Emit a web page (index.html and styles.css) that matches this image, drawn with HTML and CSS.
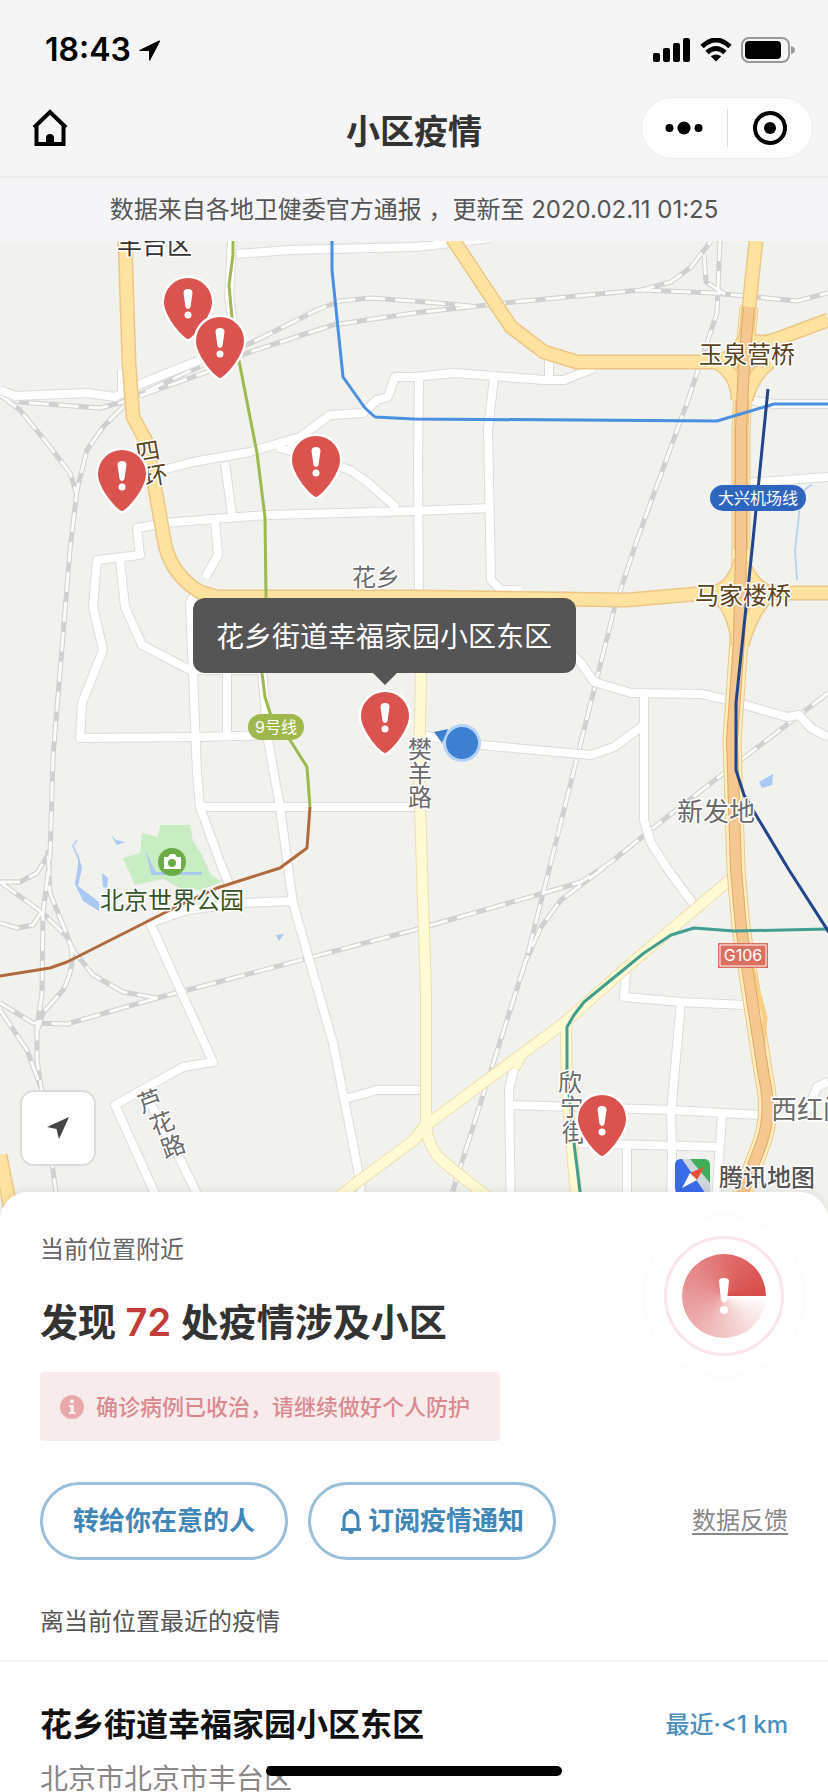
FILE: index.html
```html
<!DOCTYPE html>
<html lang="zh-CN">
<head>
<meta charset="utf-8">
<meta name="viewport" content="width=device-width, initial-scale=1">
<title>小区疫情</title>
<link rel="stylesheet" href="styles.css">
</head>
<body>
<div class="app">
  <header class="top">
    <div class="status">
      <div class="status-time">
        <span>18:43</span>
        <svg width="24" height="24" viewBox="0 0 24 24" aria-hidden="true"><path d="M21 2.500 1.500 12q-.8.6.2 1H11V22q.4 1.200 1.200.2L22 3.500Q22 2 21 2.500Z"/></svg>
      </div>
      <div class="status-icons">
        <svg width="38" height="24" viewBox="0 0 38 24" aria-hidden="true"><rect x="0" y="15" width="7" height="9" rx="2"/><rect x="10" y="10" width="7" height="14" rx="2"/><rect x="20" y="5" width="7" height="19" rx="2"/><rect x="30" y="0" width="7" height="24" rx="2"/></svg>
        <svg width="32" height="24" viewBox="0 0 32 24" aria-hidden="true"><path class="wifi" d="M2 8.500Q16-4.500 30 8.500M7 14.500Q16 6.500 25 14.500"/><path d="M16 23.500 10.800 18.300Q16 14.500 21.200 18.300Z"/></svg>
        <svg width="54" height="26" viewBox="0 0 54 26" aria-hidden="true"><rect class="cell" x="1" y="1" width="47" height="24" rx="7"/><rect x="4" y="4" width="36" height="18" rx="4"/><path class="tip" d="M50 9q4 1 4 4t-4 4Z"/></svg>
      </div>
    </div>
    <nav class="nav">
      <button class="home" type="button" aria-label="首页">
        <svg width="36" height="38" viewBox="0 0 36 38" aria-hidden="true"><path class="house" d="M2 18.500 18 3 34 18.500M4.500 17V35H31.500V17"/><path d="M14 36V29Q14 25 18 25T22 29V36Z"/></svg>
      </button>
      <h1 class="nav-title">小区疫情</h1>
      <div class="capsule">
        <button type="button" aria-label="更多"><svg width="38" height="14" viewBox="0 0 38 14" aria-hidden="true"><circle cx="4.500" cy="7" r="4"/><circle cx="19" cy="7" r="6.500"/><circle cx="33.500" cy="7" r="4"/></svg></button>
        <button type="button" aria-label="关闭"><svg width="36" height="36" viewBox="0 0 36 36" aria-hidden="true"><circle class="ring" cx="18" cy="18" r="15"/><circle cx="18" cy="18" r="6"/></svg></button>
      </div>
    </nav>
  </header>

  <p class="source">数据来自各地卫健委官方通报 ，更新至 2020.02.11 01:25</p>

  <section class="map" aria-label="疫情地图">
    <svg class="map-canvas" viewBox="0 241 828 975" role="img" aria-label="花乡周边地图">
      <defs>
        <g id="streets">
          <path d="M0 390 15 396 87 393 115 397 143 383 200 360 225 350M122 397V370"/>
          <path d="M232 241 229 297 234 330M237 254 290 250 414 247 434 245 490 238"/>
          <path d="M163 470 193 462 250 452 300 437 330 415 363 413 377 400 388 397 395 377 414 377 454 373 494 376 544 380H564L594 368M549 360V380"/>
          <path d="M277 447 350 470 367 482 397 508M288 447H315"/>
          <path d="M165 523 213 519 267 515 414 511 489 508"/>
          <path d="M165 523 137 528 140 555 97 560 93 607 103 650 82 703 80 738 197 737 270 735M120 560 125 607 142 645 190 670H266"/>
          <path d="M225 463 232 515M215 521 218 555 205 578"/>
          <path d="M200 585 190 603 193 673 197 773 200 807 220 862 229 884"/>
          <path d="M227 670V737M262 670 268 740 280 807 288 867 293 903 333 1043 360 1180 362 1216M200 807H420"/>
          <path d="M419 377 418 463 419 600M494 377 488 430 491 580 501 590H521"/>
          <path d="M570 652 581 663 594 682 631 693 701 694 724 699 787 717 799 715 811 728 828 737"/>
          <path d="M421 735 481 745 591 755 614 747 644 725M644 694V820L651 843 667 868 694 905"/>
          <path d="M293 901 243 903 187 910 150 923 213 1062 183 1067 115 1105 165 1216M143 1090 177 1153 205 1210"/>
          <path d="M345 1099 377 1090H424M626 973 624 997 681 1002 744 1005M681 1002 671 1113 672 1147 671 1216"/>
          <path d="M514 1068 509 1090 511 1216M511 1105 671 1110 760 1115M722 1115 715 1216M572 1143 721 1147M627 1147V1216"/>
          <path d="M808 1110 817 1087 828 1082M748 400 775 404H830M745 483 828 477"/>
        </g>
        <g id="rails">
          <path d="M0 395 20 402 60 405 100 408 123 402 203 365 253 342 317 310 340 301 370 298 414 301 471 306"/>
          <path d="M140 396 207 372 247 353 333 325 414 313 514 302 641 290 671 282 691 267 711 241"/>
          <path d="M641 290 714 293 797 301 828 293M704 255 706 282 726 295"/>
          <path d="M720 241 717 313 707 343 687 403 637 540 614 610 594 690 549 870 527 957 492 1067 450 1200"/>
          <path d="M0 395 20 410 47 443 70 473 76 492"/>
          <path d="M123 407 103 427 87 450 77 490 70 550 53 757 50 857 43 913 42 993 37 1027V1060L42 1093"/>
          <path d="M828 693 754 750 667 817 611 862 581 882 537 895 414 930 207 985 157 998 67 1024 33 1023 0 1003"/>
          <path d="M157 998 123 992 93 975 73 950 50 893 48 850"/>
          <path d="M0 882 43 913 67 937Q79 960 63 990L43 1013 36 1035M0 882 20 882 37 873 48 855M0 923 17 928 33 925 43 910"/>
          <path d="M0 1010 27 1050 42 1090 57 1200M605 867 561 900 541 927 524 965"/>
        </g>
        <g id="ring-roads">
          <path d="M125 241 129 363 133 417 147 443 165 545Q172 575 200 592L217 597H414L627 600 707 593H828"/>
          <path d="M452 238 511 327 544 352 577 362H714Q735 360 750 330M748 340Q762 345 777 339L828 320"/>
          <path d="M756 241 749 307 744 363 741 430 741 550M0 1155 12 1216"/>
          <path d="M718 363Q738 375 738 400M770 362Q752 375 746 400M715 593Q735 585 741 560M770 593Q755 588 744 566M720 597Q736 615 738 645M768 596Q752 610 742 645"/>
        </g>
        <g id="local-roads">
          <path d="M421 670 419 773 422 870 426 993V1120Q426 1148 445 1163L495 1203"/>
          <path d="M732 878 694 910 627 967 564 1023 514 1060 424 1127 414 1140 360 1180 315 1216M566 1023 567 1093 578 1216M520 1058 514 1068"/>
        </g>
        <path id="highway" d="M749 307 744 363 741 430V550L739 640 732 740 736 870 741 927 751 993 764 1077Q772 1112 762 1142L740 1200"/>
        <g id="pin">
          <path class="pin-body" d="M0 37C-4 37-24 15-24 0A24 24 0 0 1 24 0C24 15 4 37 0 37Z"/>
          <path class="pin-mark" d="M-4.500-9Q-4.500-13 0-13T4.500-9L2.500 5Q0 9-2.500 5Z"/><circle class="pin-mark" cy="13" r="3.500"/>
        </g>
      </defs>

      <rect class="land" x="0" y="241" width="828" height="975"/>
      <path class="park" d="M160 825H190L193 841 202 855 211 875 222 882 200 890 180 888 163 879 135 885 123 858 140 853 142 833 158 837Z"/>
      <path class="water" d="M111 835 116 840 125 842 117 845ZM145 850 153 867 158 875 151 874 148 861ZM78 853 82 868 78 886 99 902V911L83 901 75 884 78 866ZM102 873 108 878 107 888 103 887ZM151 872H202V875H151ZM276 935 284 934 279 941ZM759 782 773 774 772 785 762 788Z"/>
      <path class="stream" d="M812 485Q799 489 799 515L795 550 797 580M78 858 73 846 77 840"/>

      <use href="#rails" class="rail-edge"/><use href="#rails" class="rail-dash"/>
      <use href="#streets" class="street-edge"/><use href="#streets" class="street"/>
      <use href="#local-roads" class="local-edge"/><use href="#local-roads" class="local"/>
      <use href="#highway" class="highway-side"/><use href="#highway" class="highway-shoulder"/>
      <path class="highway-slip" d="M752 968 765 1018 762 1055"/>
      <use href="#ring-roads" class="express-edge"/><use href="#ring-roads" class="express"/>
      <use href="#highway" class="highway-edge"/><use href="#highway" class="highway"/>

      <path class="metro metro-green" d="M233 241V255L229 285 233 330 257 453 265 517 266 597 262 673 265 697 270 713 290 740 307 767 310 807"/>
      <path class="metro metro-brown" d="M310 807 307 848 280 868 217 888 180 905 67 962 50 968 0 976"/>
      <path class="metro metro-blue" d="M332 241V270L343 377 365 408 375 417 414 419 717 421 774 404H828"/>
      <path class="metro metro-teal" d="M828 929 734 931 694 928 671 935 644 953 584 1002 574 1015 567 1027V1073L574 1143 583 1216"/>
      <path class="metro metro-navy" d="M768 389 752 550 736 703V770L744 795 789 870 830 934"/>

      <g class="place">
        <text class="dark" x="117" y="254">丰台区</text>
        <text x="352" y="586">花乡</text>
        <text class="bridge" x="699" y="363">玉泉营桥</text>
        <text class="bridge" x="695" y="604">马家楼桥</text>
        <text class="large" x="677" y="821">新发地</text>
        <text class="large" x="771" y="1119">西红门</text>
        <text class="scenic" x="100" y="909">北京世界公园</text>
        <text class="bridge" transform="translate(148 452) rotate(-10)" x="-12" y="8">四</text>
        <text class="bridge" transform="translate(156 476) rotate(-10)" x="-12" y="8">环</text>
        <text><tspan x="408" y="758">樊</tspan><tspan x="408" y="782">羊</tspan><tspan x="408" y="806">路</tspan></text>
        <text><tspan x="558" y="1091">欣</tspan><tspan x="560" y="1116">宁</tspan><tspan x="562" y="1141">街</tspan></text>
        <text transform="translate(150 1101) rotate(-20)" x="-12" y="9">芦</text>
        <text transform="translate(162 1123) rotate(-20)" x="-12" y="9">花</text>
        <text transform="translate(173 1146) rotate(-20)" x="-12" y="9">路</text>
      </g>

      <g class="scenic-icon"><circle cx="172" cy="862" r="14"/><path d="M164 857H168L170 854H175L177 857H181V869H164Z"/><circle class="lens" cx="172" cy="863" r="3"/></g>
      <g class="badge">
        <rect class="badge-green" x="248" y="714" width="56" height="26" rx="13"/><text x="276" y="733">9号线</text>
        <rect class="badge-blue" x="710" y="485" width="96" height="26" rx="13"/><text x="758" y="504">大兴机场线</text>
        <rect class="badge-red" x="718" y="943" width="50" height="25"/><rect class="badge-line" x="720" y="945" width="46" height="21"/><text x="743" y="961">G106</text>
      </g>

      <g class="brand">
        <rect class="brand-road" x="675" y="1159" width="35" height="35" rx="6"/>
        <path class="brand-blue" d="M681 1159H683L706 1194H681Q675 1194 675 1188V1165Q675 1159 681 1159Z"/>
        <path class="brand-green" d="M689 1159H704Q710 1159 710 1165V1185Z"/>
        <path class="brand-road" d="M682 1159H690L710 1183V1194H706Z"/>
        <path class="brand-north" d="M704 1167 690 1173 697 1180Z"/><path class="brand-south" d="M690 1173 697 1180 682 1188Z"/>
        <text x="719" y="1186">腾讯地图</text>
      </g>

      <circle class="me-halo" cx="462" cy="743" r="19"/><path class="me" d="M434 732 448 729 442 743Z"/><circle class="me" cx="462" cy="743" r="16"/>

      <use href="#pin" x="188" y="302"/><use href="#pin" x="220" y="341"/><use href="#pin" x="122" y="474"/><use href="#pin" x="316" y="460"/><use href="#pin" x="602" y="1119"/><use href="#pin" x="385" y="716"/>

      <g class="callout">
        <rect x="193" y="598" width="383" height="75" rx="12"/><path d="M372 672H398L385 685Z"/>
        <text x="384" y="647">花乡街道幸福家园小区东区</text>
      </g>
    </svg>
    <button class="locate" type="button" aria-label="定位"><svg width="22" height="22" viewBox="0 0 22 22" aria-hidden="true"><path d="M22 0 0 10 9.500 12 12 22Z"/></svg></button>
  </section>

  <main class="panel">
    <section class="summary">
      <div class="summary-text">
        <p class="label">当前位置附近</p>
        <h2 class="found">发现 <strong>72</strong> 处疫情涉及小区</h2>
        <p class="notice"><svg width="24" height="24" viewBox="0 0 24 24" aria-hidden="true"><circle class="disc" cx="12" cy="12" r="12"/><circle class="i" cx="12" cy="6.500" r="2"/><path class="i" d="M9 10H14V17H15.500V19H9V17H10.500V12H9Z"/></svg>确诊病例已收治，请继续做好个人防护</p>
      </div>
      <div class="radar"><div class="radar-ring"><div class="radar-disc">
        <svg width="12" height="38" viewBox="0 0 12 38" aria-hidden="true"><path d="M1 4Q1 1 6 1T11 4L9 23Q6 29 3 23Z"/><circle cx="6" cy="33" r="4"/></svg>
      </div></div></div>
    </section>
    <div class="actions">
      <button class="pill" type="button">转给你在意的人</button>
      <button class="pill" type="button"><svg width="22" height="26" viewBox="0 0 22 26" aria-hidden="true"><path class="bell" d="M1 21.500H21M4 21V12Q4 4 11 4T18 12V21"/><path d="M9 4V1H13V4ZM8 22H14Q14 26 11 26T8 22Z"/></svg>订阅疫情通知</button>
      <a class="feedback" href="#feedback">数据反馈</a>
    </div>
    <h3 class="list-title">离当前位置最近的疫情</h3>
    <article class="item">
      <div class="item-head"><h4>花乡街道幸福家园小区东区</h4><span class="distance">最近·&lt;1 km</span></div>
      <p class="address">北京市北京市丰台区</p>
    </article>
  </main>
  <div class="home-bar"></div>
</div>
</body>
</html>
```
FILE: styles.css
```css
* { box-sizing: border-box; }
body, h1, h2, h3, h4, p { margin: 0; }
body { background: #fff; color: #333; font-family: "Inter", "Noto Sans CJK SC", sans-serif; font-size: 24px; line-height: 36px; }
button { margin: 0; padding: 0; border: 0; background: none; font: inherit; color: inherit; cursor: pointer; }
svg { display: block; flex: none; }

.app { position: relative; height: 100vh; overflow: hidden; }

.top { background: #f5f5f5; border-bottom: 2px solid #ebebeb; }
.status { display: flex; justify-content: space-between; align-items: center; height: 88px; padding: 12px 33px 0 45px; }
.status-time { display: flex; align-items: center; gap: 7px; color: #000; font-size: 32px; font-weight: 600; }
.status-icons { display: flex; align-items: center; gap: 9px; }
.wifi { fill: none; stroke: #000; stroke-width: 5; }
.cell { fill: none; stroke: #999; stroke-width: 2; }
.tip { fill: #999; }

.nav { display: grid; grid-template-columns: 1fr auto 1fr; align-items: center; height: 88px; padding: 0 15px 8px; }
.home { justify-self: start; margin-left: 17px; }
.house { fill: none; stroke: #000; stroke-width: 4; stroke-linejoin: miter; }
.nav-title { padding-top: 8px; font-size: 34px; font-weight: 600; line-height: 48px; }
.nav .capsule { display: flex; justify-self: end; align-items: center; width: 172px; height: 62px; border: 1px solid #ededed; border-radius: 31px; background: #fdfdfd; }
.capsule button { display: flex; flex: 1; justify-content: center; align-items: center; height: 38px; }
.capsule button + button { border-left: 1px solid #ddd; }
.ring { fill: none; stroke: #000; stroke-width: 4; }

.source { padding: 14px 16px 13px; background: #f5f5f7; color: #555; text-align: center; }

.map { position: relative; }
.map-canvas { width: 100%; height: auto; fill: none; stroke-linejoin: round; }
.land { fill: #f1f1ee; }
.park { fill: #c9edc2; }
.water { fill: #a9c8f4; }
.stream { stroke: #b9d5ef; stroke-width: 2; }
.rail-edge { stroke: #d0d0d0; stroke-width: 5; }
.rail-dash { stroke: #fbfbfa; stroke-width: 3; stroke-dasharray: 20 10; }
.street-edge { stroke: #dcdcda; stroke-width: 10; }
.street { stroke: #fff; stroke-width: 8; }
.local-edge { stroke: #efdfae; stroke-width: 12; }
.local { stroke: #fefad3; stroke-width: 10; }
.express-edge { stroke: #edc785; stroke-width: 15; }
.express { stroke: #fde2a0; stroke-width: 12; }
.highway-side { stroke: #eec783; stroke-width: 19; }
.highway-shoulder { stroke: #fdf0c0; stroke-width: 17; }
.highway-slip { stroke: #f8d084; stroke-width: 5; }
.highway-edge { stroke: #e3a767; stroke-width: 12; }
.highway { stroke: #f5c791; stroke-width: 10; }
.metro { stroke-width: 3; }
.metro-green { stroke: #9fb94f; }
.metro-brown { stroke: #b06a3d; }
.metro-blue { stroke: #4a8fe0; }
.metro-teal { stroke: #419e91; }
.metro-navy { stroke: #21458b; }

.place text { fill: #6b6b6b; stroke: #fff; stroke-width: 3; paint-order: stroke; font-size: 24px; }
.place .dark { fill: #333; font-size: 25px; }
.place .bridge { fill: #5b421c; }
.place .large { font-size: 26px; }
.place .scenic { fill: #365425; }
.scenic-icon { fill: #6cad48; }
.scenic-icon path { fill: #fff; }
.scenic-icon .lens { stroke: #6cad48; stroke-width: 2; }
.badge text { fill: #fff; font-size: 16px; text-anchor: middle; }
.badge-green { fill: #9fb84e; }
.badge-blue { fill: #2e65bf; }
.badge-red { fill: #db6f60; }
.badge-line { stroke: #fff; }
.brand text { fill: #555; stroke: #fff; stroke-width: 3; paint-order: stroke; font-size: 24px; font-weight: 500; }
.brand-road { fill: #cfd5dc; }
.brand-blue { fill: #3a6bea; }
.brand-green { fill: #3fae58; }
.brand-north { fill: #e9502f; }
.brand-south { fill: #fff; }
.me { fill: #3d80d2; }
.me-halo { fill: #b5d4f7; }
.pin-body { fill: #da534f; stroke: #fff; stroke-width: 5; paint-order: stroke; }
.pin-mark { fill: #fff; }
.callout { fill: #555; }
.callout text { fill: #fff; font-size: 28px; text-anchor: middle; }
.locate { position: absolute; left: 20px; bottom: 50px; display: flex; justify-content: center; align-items: center; width: 76px; height: 76px; border: 2px solid #ddd; border-radius: 14px; background: #fff; fill: #444; }

.panel { position: relative; margin-top: -24px; border-radius: 28px 28px 0 0; background: #fefefe; box-shadow: 0 -3px 8px rgba(0, 0, 0, .06); }
.summary { display: flex; justify-content: space-between; align-items: flex-start; padding: 22px 22px 0 40px; }
.summary-text { padding-top: 18px; }
.label { color: #666; }
.found { margin-top: 26px; font-size: 38px; font-weight: 600; line-height: 56px; white-space: nowrap; }
.found strong { color: #c33c38; font-weight: 600; }
.notice { display: flex; align-items: center; gap: 12px; width: 460px; height: 69px; margin-top: 22px; padding-left: 20px; border-radius: 4px; background: #f7ebec; color: #d98a90; font-size: 22px; font-weight: 500; white-space: nowrap; }
.disc { fill: #e9a9ab; }
.i { fill: #f9eeee; }
.radar { display: grid; place-items: center; width: 164px; height: 164px; border: 2px solid #fcfafa; border-radius: 50%; }
.radar-ring { display: grid; place-items: center; width: 120px; height: 120px; border: 3px solid #f9e6e8; border-radius: 50%; }
.radar-disc { display: grid; place-items: center; width: 84px; height: 84px; border-radius: 50%; background: conic-gradient(from 90deg, #fff, #f7dada 15%, #eca8a9 40%, #e48283 65%, #e06a68 78%, #d74c4a); }
.radar-disc svg { fill: #fff; }

.actions { display: flex; align-items: center; gap: 20px; margin-top: 41px; padding: 0 40px; }
.pill { display: flex; justify-content: center; align-items: center; gap: 6px; width: 248px; height: 78px; border: 3px solid #9ac0d9; border-radius: 39px; color: #4087b8; fill: #4087b8; font-size: 26px; font-weight: 600; }
.bell { fill: none; stroke: #4087b8; stroke-width: 3; }
.feedback { margin-left: auto; color: #888; text-decoration: underline; text-underline-offset: 4px; text-decoration-thickness: 2px; }
.list-title { padding: 44px 40px 20px; border-bottom: 2px solid #f5f5f5; color: #555; font-size: 24px; font-weight: 400; }
.item { padding: 39px 40px 0; }
.item-head { display: flex; justify-content: space-between; align-items: center; }
.item-head h4 { color: #111; font-size: 32px; font-weight: 600; line-height: 48px; }
.distance { color: #4a8fbe; font-weight: 500; }
.address { margin-top: 10px; color: #888; font-size: 28px; line-height: 40px; }

.home-bar { position: absolute; bottom: 16px; left: 50%; width: 296px; height: 10px; border-radius: 5px; background: #000; transform: translateX(-50%); }
```
